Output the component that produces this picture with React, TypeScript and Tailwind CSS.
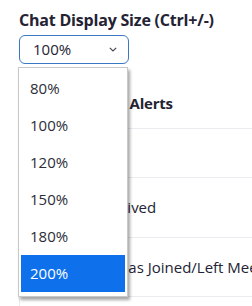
import React from "react";

const options = ["80%", "100%", "120%", "150%", "180%", "200%"];

function Chevron() {
  return (
    <svg width="8" height="5" viewBox="0 0 8 5" className="text-[#4a4a55]">
      <path d="M0.8 0.8 L4 4 L7.2 0.8" fill="none" stroke="currentColor" strokeWidth="1.2" />
    </svg>
  );
}

export default function App() {
  return (
    <div
      className="relative w-[252px] h-[306px] overflow-hidden bg-white text-[#232333]"
      style={{ fontFamily: '"Open Sans", "Noto Sans", sans-serif' }}
    >
      <div className="pl-[19px] pt-[10px]">
        <div className="text-[16px] font-bold leading-[20px] tracking-[-0.2px] whitespace-nowrap">
          Chat Display Size (Ctrl+/-)
        </div>
        <div className="relative mt-[5px]">
          <div className="w-[110px] h-[29px] rounded-[6px] border border-[#3a78c4] flex items-center justify-between pl-[13px] pr-[11px]">
            <span className="text-[15px] leading-none text-[#232333]">100%</span>
            <Chevron />
          </div>
          <div className="absolute left-[-1px] top-[32px] z-10 w-[110px] bg-white border border-[#c8c8c8] shadow-[2px_3px_3px_rgba(0,0,0,0.35)] px-[2px] pt-[2px] pb-[4px]">
            {options.map((o) => (
              <div
                key={o}
                className={
                  "h-[37px] flex items-center pl-[9px] text-[15px] " +
                  (o === "200%" ? "bg-[#0e71eb] text-white" : "text-[#2d2d38]")
                }
              >
                {o}
              </div>
            ))}
          </div>
        </div>
        <div className="mt-[26px] flex items-center h-[27px] pl-[6px] text-[15px] font-bold whitespace-nowrap tracking-[-0.2px]">
          Chat Message Alerts
        </div>
      </div>
      <div className="mt-[11px] ml-[19px]">
        <div className="border-t border-[#ececf0] h-[49px] flex items-center pl-[29px] text-[15px] whitespace-nowrap">
          Mentions
        </div>
        <div className="border-t border-[#ececf0] h-[60px] flex items-center pl-[33px] text-[15px] whitespace-nowrap">
          Reply Received
        </div>
        <div className="border-t border-[#ececf0] h-[59px] flex items-center pl-[30px] text-[15px] whitespace-nowrap">
          Someone has Joined/Left Meeting
        </div>
        <div className="border-t border-l border-[#ececf0] h-[20px]" />
      </div>
    </div>
  );
}
